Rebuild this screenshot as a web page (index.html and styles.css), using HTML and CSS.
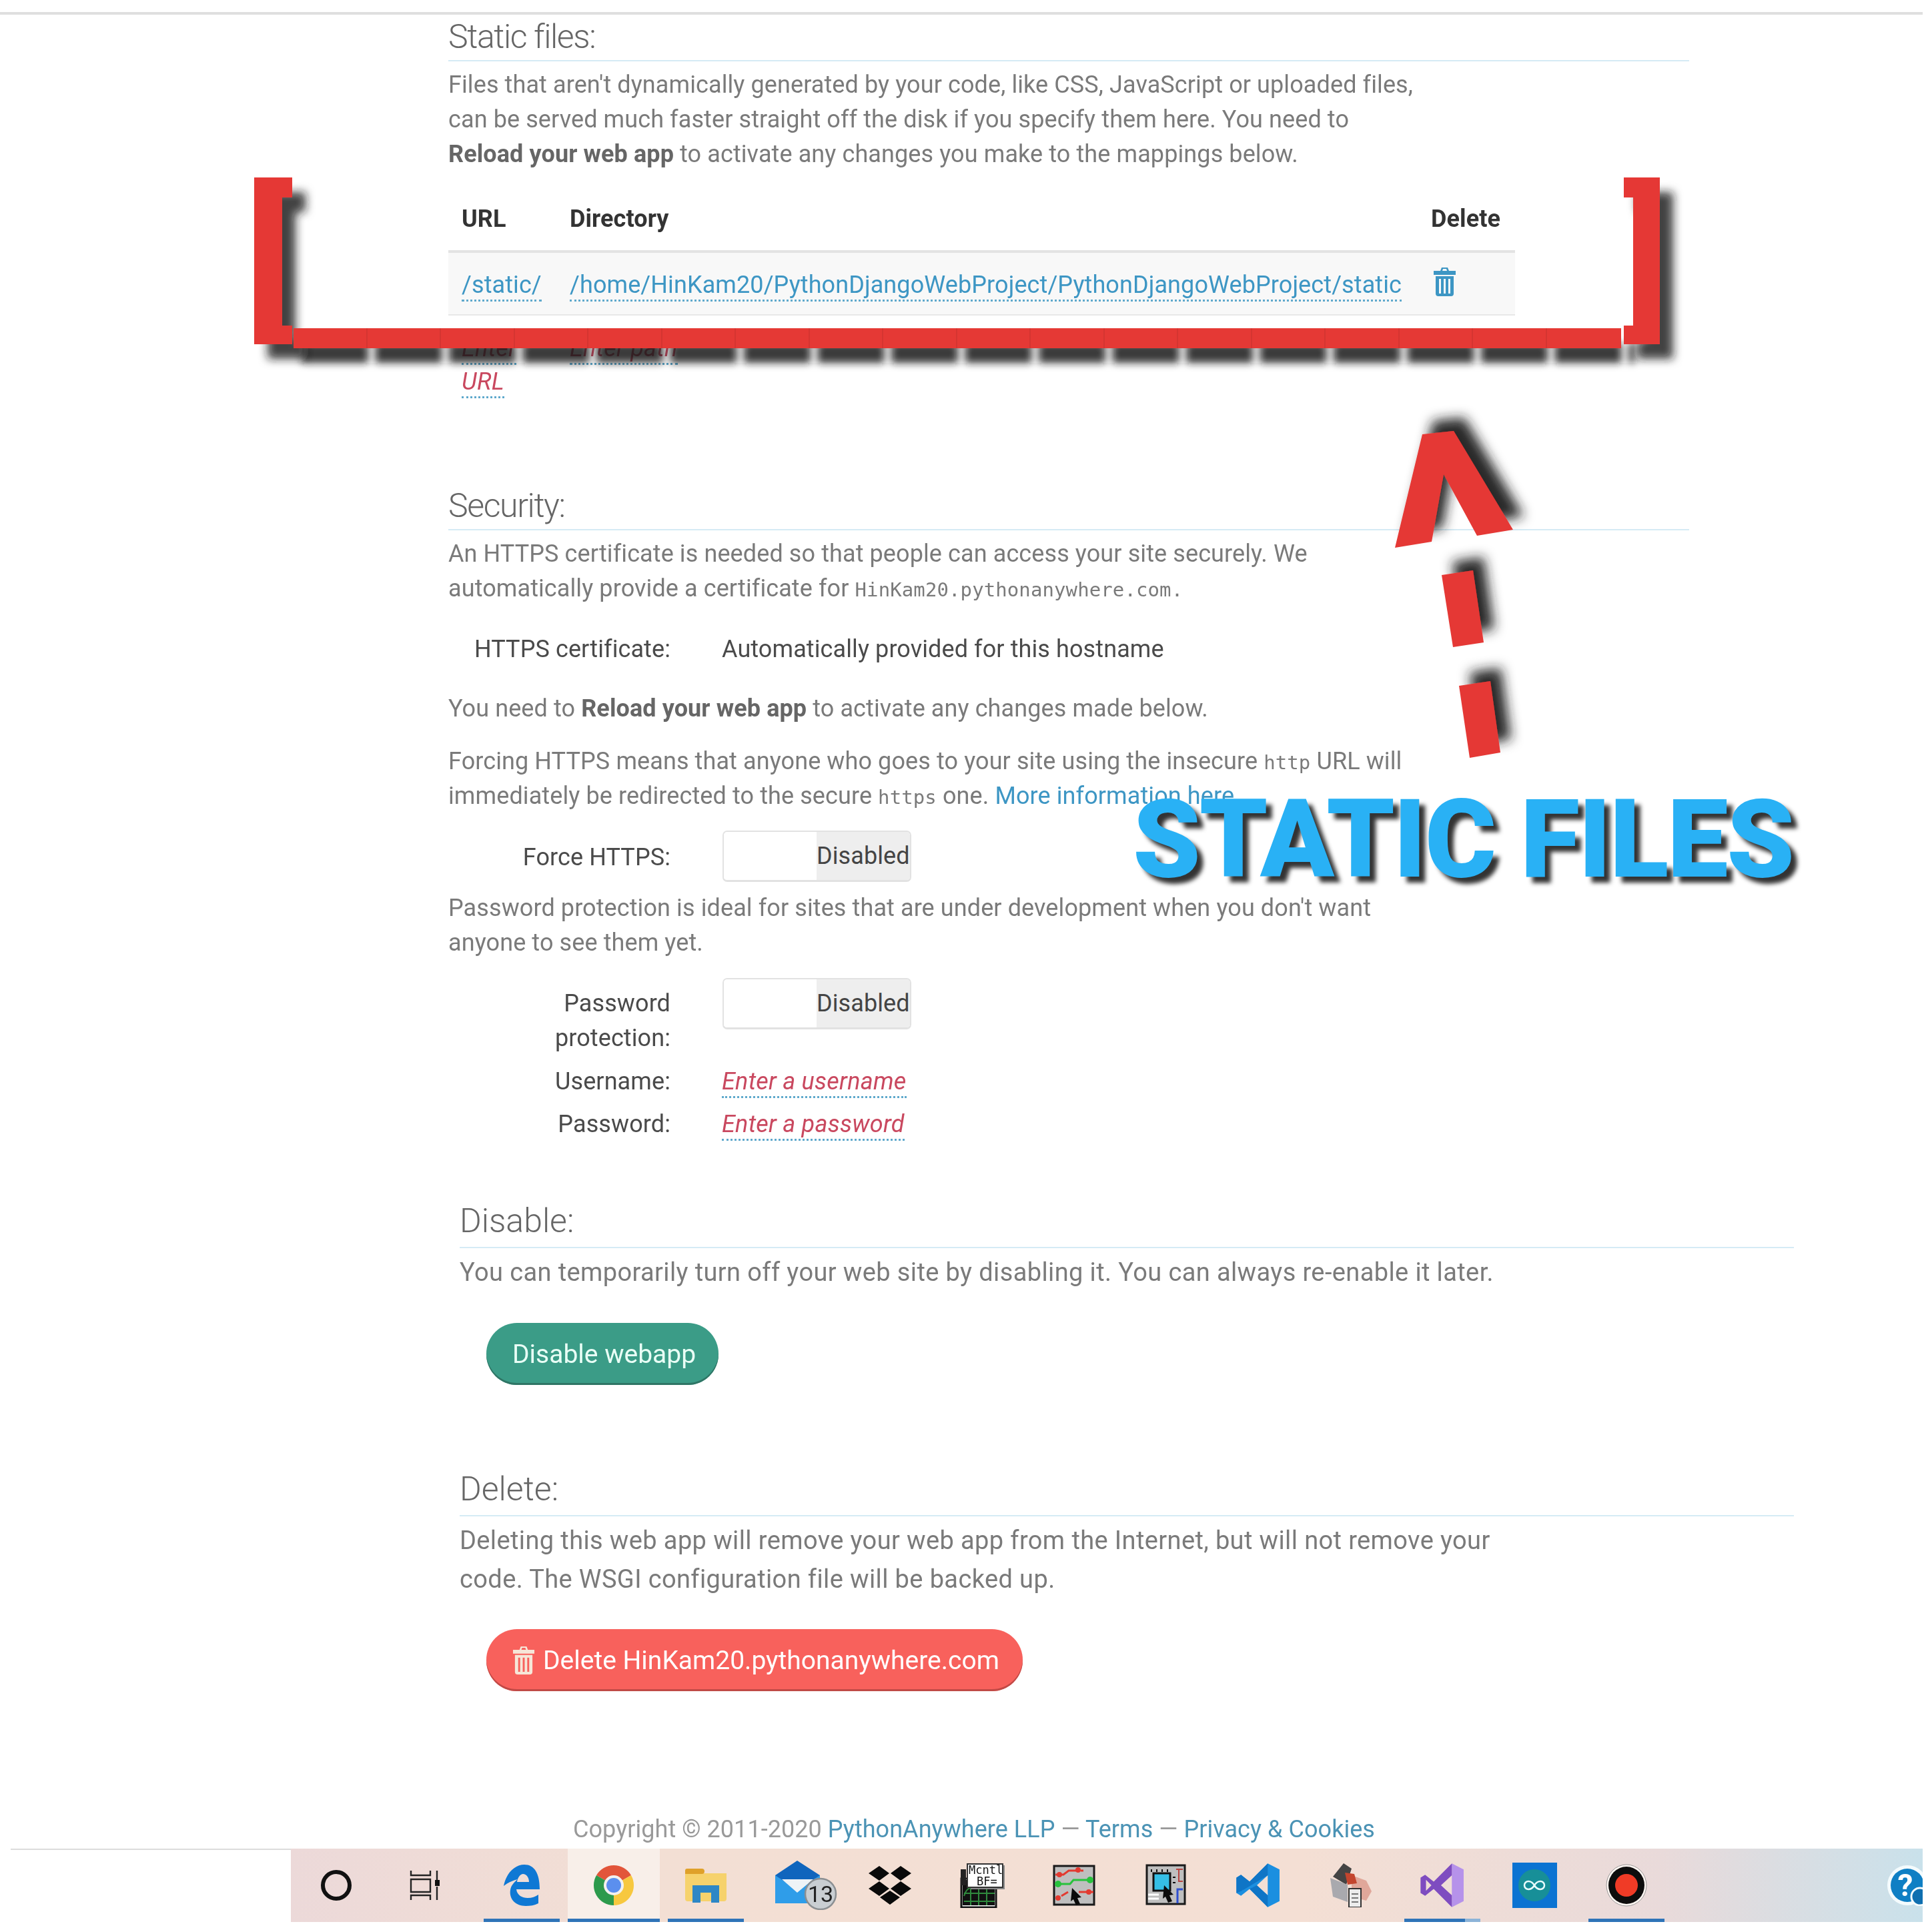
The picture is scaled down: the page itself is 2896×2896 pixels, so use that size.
FILE: index.html
```html
<!DOCTYPE html>
<html lang="en">
<head>
    <meta charset="UTF-8">
    <title>Web app settings</title>
    <link rel="stylesheet" href="styles.css">
</head>
<body>
<div class="page">
    <div class="topline"></div>

    <div class="content">
        <section class="upper">
            <h2>Static files:</h2>
            <p>Files that aren't dynamically generated by your code, like CSS, JavaScript or uploaded files,<br>
            can be served much faster straight off the disk if you specify them here. You need to<br>
            <b>Reload your web app</b> to activate any changes you make to the mappings below.</p>

            <table class="mappings">
                <thead>
                    <tr>
                        <th class="col-url">URL</th>
                        <th class="col-dir">Directory</th>
                        <th class="col-del">Delete</th>
                    </tr>
                </thead>
                <tbody>
                    <tr class="mapping">
                        <td><a class="editable" href="#">/static/</a></td>
                        <td><a class="editable" href="#">/home/HinKam20/PythonDjangoWebProject/PythonDjangoWebProject/static</a></td>
                        <td>
                            <svg class="trash" viewBox="0 0 35 43"><path fill-rule="evenodd" d="M13 0h9l2 5h10v6H1V5h10zM15 2l-1 3h7l-1-3zM4 13h27v26q0 4-4 4H8q-4 0-4-4zM9 17v22h3V17zM16 17v22h3V17zM23 17v22h3V17z"/></svg>
                        </td>
                    </tr>
                    <tr class="new-mapping">
                        <td><a class="editable placeholder" href="#">Enter URL</a></td>
                        <td><a class="editable placeholder" href="#">Enter path</a></td>
                        <td></td>
                    </tr>
                </tbody>
            </table>
        </section>

        <section class="upper security">
            <h2>Security:</h2>
            <p>An HTTPS certificate is needed so that people can access your site securely. We<br>
            automatically provide a certificate for <code>HinKam20.pythonanywhere.com.</code></p>

            <div class="field cert-row">
                <label>HTTPS certificate:</label>
                <span>Automatically provided for this hostname</span>
            </div>

            <p class="reload-note">You need to <b>Reload your web app</b> to activate any changes made below.</p>
            <p class="force-note">Forcing HTTPS means that anyone who goes to your site using the insecure <code>http</code> URL will<br>
            immediately be redirected to the secure <code>https</code> one. <a href="#">More information here.</a></p>

            <div class="field force-row">
                <label>Force HTTPS:</label>
                <div class="toggle"><span class="toggle-off"></span><span class="toggle-text">Disabled</span></div>
            </div>

            <p class="password-note">Password protection is ideal for sites that are under development when you don't want<br>
            anyone to see them yet.</p>

            <div class="field password-row">
                <label>Password<br>protection:</label>
                <div class="toggle"><span class="toggle-off"></span><span class="toggle-text">Disabled</span></div>
            </div>
            <div class="field username-row">
                <label>Username:</label>
                <span><a class="editable placeholder" href="#">Enter a username</a></span>
            </div>
            <div class="field pass-row">
                <label>Password:</label>
                <span><a class="editable placeholder" href="#">Enter a password</a></span>
            </div>
        </section>

        <section class="lower disable">
            <h2>Disable:</h2>
            <p>You can temporarily turn off your web site by disabling it. You can always re-enable it later.</p>
            <button class="btn btn-green">Disable webapp</button>
        </section>

        <section class="lower delete">
            <h2>Delete:</h2>
            <p>Deleting this web app will remove your web app from the Internet, but will not remove your<br>
            code. The WSGI configuration file will be backed up.</p>
            <button class="btn btn-red">
                <svg class="btn-trash" viewBox="0 0 35 43"><path fill-rule="evenodd" d="M13 0h9l2 5h10v6H1V5h10zM15 2l-1 3h7l-1-3zM4 13h27v26q0 4-4 4H8q-4 0-4-4zM9 17v22h3V17zM16 17v22h3V17zM23 17v22h3V17z"/></svg>
                Delete HinKam20.pythonanywhere.com
            </button>
        </section>

        <footer class="copyright">Copyright © 2011-2020 <a href="#">PythonAnywhere LLP</a> — <a href="#">Terms</a> — <a href="#">Privacy &amp; Cookies</a></footer>
    </div>

    <div class="dock">
        <div class="dock-rule"></div>
        <div class="taskbar">
            <div class="tile tile-search">
                <svg width="50" height="48" viewBox="0 0 50 48"><ellipse cx="25" cy="24" rx="20" ry="20" fill="none" stroke="#111" stroke-width="6"/></svg>
            </div>
            <div class="tile tile-view">
                <svg width="46" height="44" viewBox="0 0 46 44" fill="none" stroke="#222" stroke-width="2.4"><path d="M2 0v7h29V0M2 13h29v19H2zM2 44v-7h29v7M41 0v14M41 24v20"/><rect x="38" y="14" width="7" height="9" fill="#111" stroke="none"/></svg>
            </div>
            <div class="tile tile-edge pinned">
                <svg width="54" height="62" viewBox="0 0 54 62"><path fill="#0f78d4" fill-rule="evenodd" d="M0 32C4 12 17 0 31 0 46 0 54 13 54 37H19c1 9 9 13 17 13 6 0 12-2 16-5v13c-6 3-12 4-19 4C16 62 8 50 10 38c1-7 6-12 11-16C13 24 6 27 0 32zM20 26h18c0-7-4-12-9-12-4 0-8 5-9 12z"/></svg>
            </div>
            <div class="tile tile-active pinned">
                <svg width="62" height="62" viewBox="0 0 62 62">
                    <path fill="#e2553a" d="M31 31 5 16A30 30 0 0 1 57 16z"/>
                    <path fill="#2d9a4c" d="M31 31 5 16A30 30 0 0 0 31 61z"/>
                    <path fill="#f7c83f" d="M31 31 57 16A30 30 0 0 1 31 61z"/>
                    <circle cx="31" cy="31" r="15" fill="#f3f1ee"/>
                    <circle cx="31" cy="31" r="11" fill="#5b8fee"/>
                </svg>
            </div>
            <div class="tile pinned">
                <svg width="62" height="52" viewBox="0 0 62 52">
                    <path fill="#f6d26c" d="M0 8h62v38q0 4-4 4H4q-4 0-4-4z"/>
                    <path fill="#dfa12a" d="M0 4q0-3 3-3h22q4 0 4 4t-4 4H0z"/>
                    <path fill="#2e87c6" fill-rule="evenodd" d="M11 26h40v26H39V37H23v15H11z"/>
                </svg>
            </div>
            <div class="tile">
                <svg class="mail-icon" width="94" height="74" viewBox="0 0 94 74">
                    <path fill="#2f9de9" d="M0 22h67v42H0z"/>
                    <path fill="#0f65bd" d="M0 22 33 0l34 22-34 22z"/>
                    <path fill="#eef3f6" d="M10 28h47L33 48z"/>
                    <circle cx="68" cy="50" r="23" fill="#c9ced2" stroke="#8b8f92" stroke-width="2.5"/>
                    <text class="mail-count" x="68" y="62" text-anchor="middle">13</text>
                </svg>
            </div>
            <div class="tile">
                <svg width="66" height="58" viewBox="0 0 66 58"><path fill="#0a0a0a" d="M17 0l15 11-15 11L1 11zM49 0l16 11-16 11-15-11zM17 23l15 11-15 11L1 34zM49 23l16 11-16 11-15-11zM33 37l15 10-15 11-15-11z"/></svg>
            </div>
            <div class="tile">
                <svg width="68" height="68" viewBox="0 0 68 68">
                    <rect x="3" y="24" width="52" height="43" fill="#fff" stroke="#111" stroke-width="3"/>
                    <path fill="#111" d="M5 26h48v38H5z"/>
                    <path stroke="#2f8a3d" stroke-width="2" fill="none" d="M7 50q4-12 10-12h36M7 58h46M17 36v28M29 36v28M41 36v28M7 46h46"/>
                    <path fill="#8a8a8a" d="M17 4h51v36H17z"/>
                    <rect x="12" y="2" width="53" height="35" fill="#fff" stroke="#333" stroke-width="2"/>
                    <path fill="#222" d="M2 10h8v24H2z"/>
                    <text class="pixel-text" x="14" y="17">Mcntl</text>
                    <text class="pixel-text" x="26" y="34">BF=</text>
                </svg>
            </div>
            <div class="tile">
                <svg width="66" height="64" viewBox="0 0 66 64">
                    <rect x="3" y="3" width="60" height="58" fill="#bfbfbf" stroke="#1a1a1a" stroke-width="3"/>
                    <path fill="none" stroke="#e33a30" stroke-width="3" d="M5 16h12l8-6h16M43 10h4M40 42h22M14 48l10-6"/>
                    <path fill="none" stroke="#28c23d" stroke-width="3" d="M5 30h22l5-6h26"/>
                    <circle cx="11" cy="16" r="4" fill="#e33a30"/><circle cx="39" cy="9" r="4" fill="#e33a30"/>
                    <circle cx="9" cy="30" r="5" fill="#28c23d"/><circle cx="57" cy="24" r="5" fill="#28c23d"/>
                    <circle cx="9" cy="51" r="4" fill="#e33a30"/><circle cx="55" cy="42" r="4" fill="#e33a30"/>
                    <path fill="#0b0b0b" d="M30 36l14 14-6 1 4 9-6 2-4-9-4 3z"/>
                </svg>
            </div>
            <div class="tile">
                <svg width="62" height="64" viewBox="0 0 62 64">
                    <rect x="2" y="2" width="57" height="58" fill="#bfbfbf" stroke="#1a1a1a" stroke-width="3"/>
                    <rect x="12" y="14" width="25" height="26" fill="#35bfe6" stroke="#111" stroke-width="3"/>
                    <path stroke="#111" stroke-width="2" d="M9 8v4M17 8v4M25 8v4M33 8v4M41 20h4M41 28h4"/>
                    <path fill="none" stroke="#b8433f" stroke-width="2" d="M46 8h10M50 8v18h6"/>
                    <path fill="none" stroke="#2f50d0" stroke-width="3" d="M56 38h-8v21"/>
                    <path stroke="#fff" stroke-width="3" d="M4 46h16M4 52h16"/>
                    <path fill="#0b0b0b" d="M28 32l14 14-6 1 4 9-6 2-4-9-4 3z"/>
                </svg>
            </div>
            <div class="tile">
                <svg width="68" height="68" viewBox="0 0 100 100">
                    <path fill="#1b8fe0" fill-rule="evenodd" d="M71 2 97 15V85L71 98 31 58 12 73 2 67V33L12 27 31 42zM71 28 47 50 71 72zM14 38V62L26 50z"/>
                    <path fill="#0f75c6" d="M71 2V28L14 62 2 67V33L12 27 31 42zM71 98V72L47 50 31 58z"/>
                </svg>
            </div>
            <div class="tile">
                <svg width="64" height="66" viewBox="0 0 64 66">
                    <path fill="#e0a79a" d="M34 18l22 8 8 16-8 14-22-6z"/>
                    <path fill="#444" d="M6 20 22 0l12 8-8 24z"/>
                    <path fill="#c3452e" d="M24 14l14 2 4 14-14 2z"/>
                    <path fill="#a9a9ae" d="M2 22l26 10v26L6 50z"/>
                    <path fill="#ececec" stroke="#333" stroke-width="2" d="M30 38h18v28H30z"/>
                    <path stroke="#777" stroke-width="2" d="M34 46h10M34 52h10M34 58h10"/>
                </svg>
            </div>
            <div class="tile pinned pinned-open">
                <svg width="68" height="68" viewBox="0 0 100 100">
                    <path fill="#b692ea" d="M71 2 97 15V85L71 98V72L71 28z"/>
                    <path fill="#7e4cc0" fill-rule="evenodd" d="M71 2V28L47 50 71 72V98L31 58 12 73 2 67V33L12 27 31 42zM14 38V62L26 50z"/>
                </svg>
            </div>
            <div class="tile">
                <svg width="67" height="68" viewBox="0 0 67 68">
                    <rect width="67" height="68" fill="#0b73d2"/>
                    <circle cx="33" cy="34" r="24" fill="#178f98"/>
                    <path fill="none" stroke="#e8fbfb" stroke-width="2.5" d="M33 34c-3-5-6-6-9-6a6 6 0 0 0 0 12c3 0 6-1 9-6s6-6 9-6a6 6 0 0 1 0 12c-3 0-6-1-9-6z"/>
                </svg>
            </div>
            <div class="tile pinned">
                <svg width="62" height="64" viewBox="0 0 62 64">
                    <ellipse cx="31" cy="32" rx="30" ry="31" fill="#fdf6f2" stroke="#999" stroke-width="1"/>
                    <ellipse cx="31" cy="32" rx="27" ry="28" fill="#0d0d0d"/>
                    <circle cx="31" cy="32" r="17" fill="#f03b26"/>
                </svg>
            </div>
            <div class="tile-help">
                <svg width="62" height="62" viewBox="0 0 62 62">
                    <circle cx="31" cy="31" r="30" fill="#f4fbfd"/>
                    <circle cx="31" cy="31" r="25" fill="#0f7fc4"/>
                    <text class="help-mark" x="28" y="47" text-anchor="middle">?</text>
                    <circle cx="50" cy="48" r="13" fill="#0f6fb0" stroke="#f4fbfd" stroke-width="3"/>
                </svg>
            </div>
        </div>
    </div>

    <!-- red callout drawn on top of the page -->
    <svg class="callout" viewBox="0 0 2896 2896">
        <defs>
            <filter id="shadow-down" x="-30%" y="-20%" width="160%" height="140%">
                <feDropShadow dx="20" dy="22" stdDeviation="7" flood-color="#1a1a1a" flood-opacity="0.82"/>
            </filter>
            <filter id="shadow-up" x="-30%" y="-30%" width="160%" height="160%">
                <feDropShadow dx="16" dy="-20" stdDeviation="9" flood-color="#1a1a1a" flood-opacity="0.95"/>
            </filter>
            <filter id="soften" filterUnits="userSpaceOnUse" x="400" y="480" width="2100" height="100">
                <feGaussianBlur stdDeviation="6"/>
            </filter>
        </defs>
        <path class="bar-shadow" filter="url(#soften)" d="M452 529H2450"/>
        <g filter="url(#shadow-down)" fill="#e53935">
            <path d="M381 266h57v30h-15v192h15v28h-57z"/>
            <path d="M2434 266h54v250h-54v-28h14V296h-14z"/>
        </g>
        <rect class="bar" x="440" y="492" width="1990" height="30"/>
        <path class="bar-joints" d="M550 492v30M660 492v30M771 492v30M881 492v30M992 492v30M1102 492v30M1213 492v30M1323 492v30M1434 492v30M1544 492v30M1655 492v30M1765 492v30M1876 492v30M1986 492v30M2097 492v30M2207 492v30M2318 492v30"/>
        <g filter="url(#shadow-up)" fill="#e53935">
            <path d="M2132 651 2179 646 2268 794 2214 803 2164 711 2146 812 2091 821z"/>
            <path d="M2161 862 2208 855 2224 963 2178 970z"/>
            <path d="M2187 1028 2234 1021 2249 1128 2203 1136z"/>
        </g>
    </svg>
    <div class="static-title">STATIC FILES</div>
</div>
</body>
</html>
```

FILE: styles.css
```css
* {
    margin: 0;
    padding: 0;
    box-sizing: border-box;
}

body {
    background: #fff;
    font-family: Roboto, sans-serif;
    font-size: 36px;
    color: #7a7a7a;
}

.page {
    position: relative;
    width: 2896px;
    height: 2896px;
    overflow: hidden;
    background: #fff;
}

.topline {
    height: 4px;
    margin: 18px 14px 0 0;
    background: #dfdfdf;
}

.content {
    filter: blur(0.6px);
}

a {
    color: #3d96c4;
    text-decoration: none;
}

h2 {
    font-size: 50px;
    font-weight: 300;
    line-height: 64px;
    color: #666;
    padding-bottom: 3px;
    border-bottom: 2px solid #d5ebf5;
    margin-bottom: 9px;
}

b {
    color: #666;
}

p {
    line-height: 52px;
}

code {
    font-family: "DejaVu Sans Mono", monospace;
    font-size: 29px;
    line-height: 1;
}

.upper {
    margin-left: 672px;
    width: 1860px;
    letter-spacing: 0.1px;
}

.upper h2 {
    letter-spacing: -1.4px;
    padding-top: 1px;
}

.mappings {
    width: 1599px;
    margin-top: 24px;
    border-collapse: collapse;
    table-layout: fixed;
}

.mappings th {
    height: 96px;
    text-align: left;
    font-weight: 700;
    color: #333;
    padding-left: 20px;
    border-bottom: 4px solid #e3e3e3;
}

.col-url {
    width: 162px;
}

.col-dir {
    width: 1291px;
}

.mappings td {
    padding-left: 20px;
    vertical-align: top;
}

.mapping td {
    height: 95px;
    padding-top: 26px;
    line-height: 44px;
    background: #f8f8f8;
    border-bottom: 2px solid #e8e8e8;
}

.new-mapping td {
    padding-top: 24px;
    line-height: 50px;
}

.editable {
    border-bottom: 3px dotted #5fa9cc;
    padding-bottom: 1px;
}

.placeholder {
    color: #c9485f;
    font-style: italic;
    letter-spacing: 0.25px;
}

.trash {
    width: 35px;
    height: 43px;
    margin: -4px 0 0 3px;
    fill: #3d96c4;
    display: block;
}

.security {
    margin-top: 128px;
}

.field {
    display: grid;
    grid-template-columns: 333px 1fr;
    column-gap: 77px;
    line-height: 52px;
    color: #4a4a4a;
}

.field label {
    text-align: right;
}

.cert-row {
    margin-top: 39px;
}

.reload-note {
    margin-top: 37px;
}

.force-note {
    margin-top: 27px;
}

.force-row {
    margin-top: 26px;
}

.force-row label {
    padding-top: 14px;
}

.password-note {
    margin-top: 13px;
}

.password-row {
    margin-top: 27px;
}

.password-row label {
    padding-top: 12px;
}

.username-row {
    margin-top: 13px;
}

.pass-row {
    margin-top: 12px;
}

.toggle {
    display: flex;
    width: 283px;
    height: 77px;
    margin-left: 1px;
    border: 2px solid #e2e2e2;
    border-bottom-width: 3px;
    border-radius: 7px;
    overflow: hidden;
}

.toggle-off {
    width: 139px;
    background: #fff;
}

.toggle-text {
    flex: 1;
    background: #eee;
    line-height: 72px;
    white-space: nowrap;
    color: #444;
}

.lower {
    margin-left: 689px;
    width: 2000px;
}

.lower h2 {
    padding-bottom: 7px;
    margin-bottom: 10px;
}

.lower p {
    font-size: 38px;
    letter-spacing: 0.38px;
}

.disable {
    margin-top: 87px;
}

.delete {
    margin-top: 124px;
}

.delete h2 {
    margin-bottom: 7px;
}

.delete p {
    line-height: 58px;
}

.btn {
    display: flex;
    align-items: center;
    margin-left: 40px;
    height: 93px;
    border: none;
    border-radius: 46px;
    font-family: Roboto, sans-serif;
    font-size: 39px;
    padding-left: 39px;
}

.btn-green {
    width: 348px;
    margin-top: 50px;
    background: #3b9c87;
    color: #e9fff6;
    box-shadow: inset 0 -3px 0 #2f7565;
}

.btn-red {
    width: 804px;
    margin-top: 46px;
    background: #f8615c;
    color: #fff;
    box-shadow: inset 0 -3px 0 #c04a46;
}

.btn-trash {
    width: 34px;
    height: 44px;
    fill: #f6e6d8;
    margin-right: 12px;
}

.copyright {
    margin-top: 181px;
    padding-left: 859px;
    line-height: 52px;
    letter-spacing: 0.05px;
    color: #999;
}

.copyright a {
    color: #4b93b5;
}

.dock {
    display: flex;
    height: 110px;
    margin: 3px 14px 0 16px;
    filter: blur(0.7px);
}

.dock-rule {
    width: 420px;
    border-top: 2px solid #dcdcdc;
}

.taskbar {
    flex: 1;
    display: flex;
    overflow: hidden;
    background: linear-gradient(90deg, #ecd9d9 0%, #f3dfd4 22%, #f4dfd4 62%, #e9dada 84%, #c9e1eb 100%);
}

.tile {
    position: relative;
    flex: none;
    width: 138px;
    display: flex;
    align-items: center;
    justify-content: center;
}

.tile-search {
    width: 136px;
}

.tile-view {
    width: 130px;
    margin-right: 11px;
}

.tile-active {
    background: #f8efe9;
}

.tile-help {
    margin-left: auto;
    margin-right: -8px;
    align-self: center;
    display: flex;
}

.pinned::after {
    content: "";
    position: absolute;
    left: 12px;
    right: 12px;
    bottom: 0;
    height: 5px;
    background: #2f74b8;
}

.tile-active::after {
    left: 0;
    right: 0;
}

.pinned-open::after {
    background: linear-gradient(90deg, #2f74b8 80%, #8db4d8 80%);
}

.mail-icon {
    margin-left: 26px;
}

.mail-count {
    font-family: Roboto, sans-serif;
    font-size: 34px;
    fill: #222;
}

.pixel-text {
    font-family: "DejaVu Sans Mono", monospace;
    font-size: 17px;
    fill: #111;
}

.help-mark {
    font-family: Roboto, sans-serif;
    font-weight: 700;
    font-size: 46px;
    fill: #fff;
}

.callout {
    position: absolute;
    left: 0;
    top: 0;
    width: 2896px;
    height: 2896px;
    pointer-events: none;
}

.bar {
    fill: #e53935;
}

.bar-shadow {
    fill: none;
    stroke: #1a1a1a;
    stroke-opacity: 0.85;
    stroke-width: 30;
    stroke-dasharray: 100 10.5;
}

.bar-joints {
    stroke: #cf3430;
    stroke-width: 1.5;
}

.static-title {
    position: absolute;
    left: 1698px;
    top: 1164px;
    font-size: 163px;
    line-height: 190px;
    font-weight: 900;
    letter-spacing: -2.2px;
    color: #29b1f5;
    white-space: nowrap;
    text-shadow: 9px 9px 6px #333;
}
```
